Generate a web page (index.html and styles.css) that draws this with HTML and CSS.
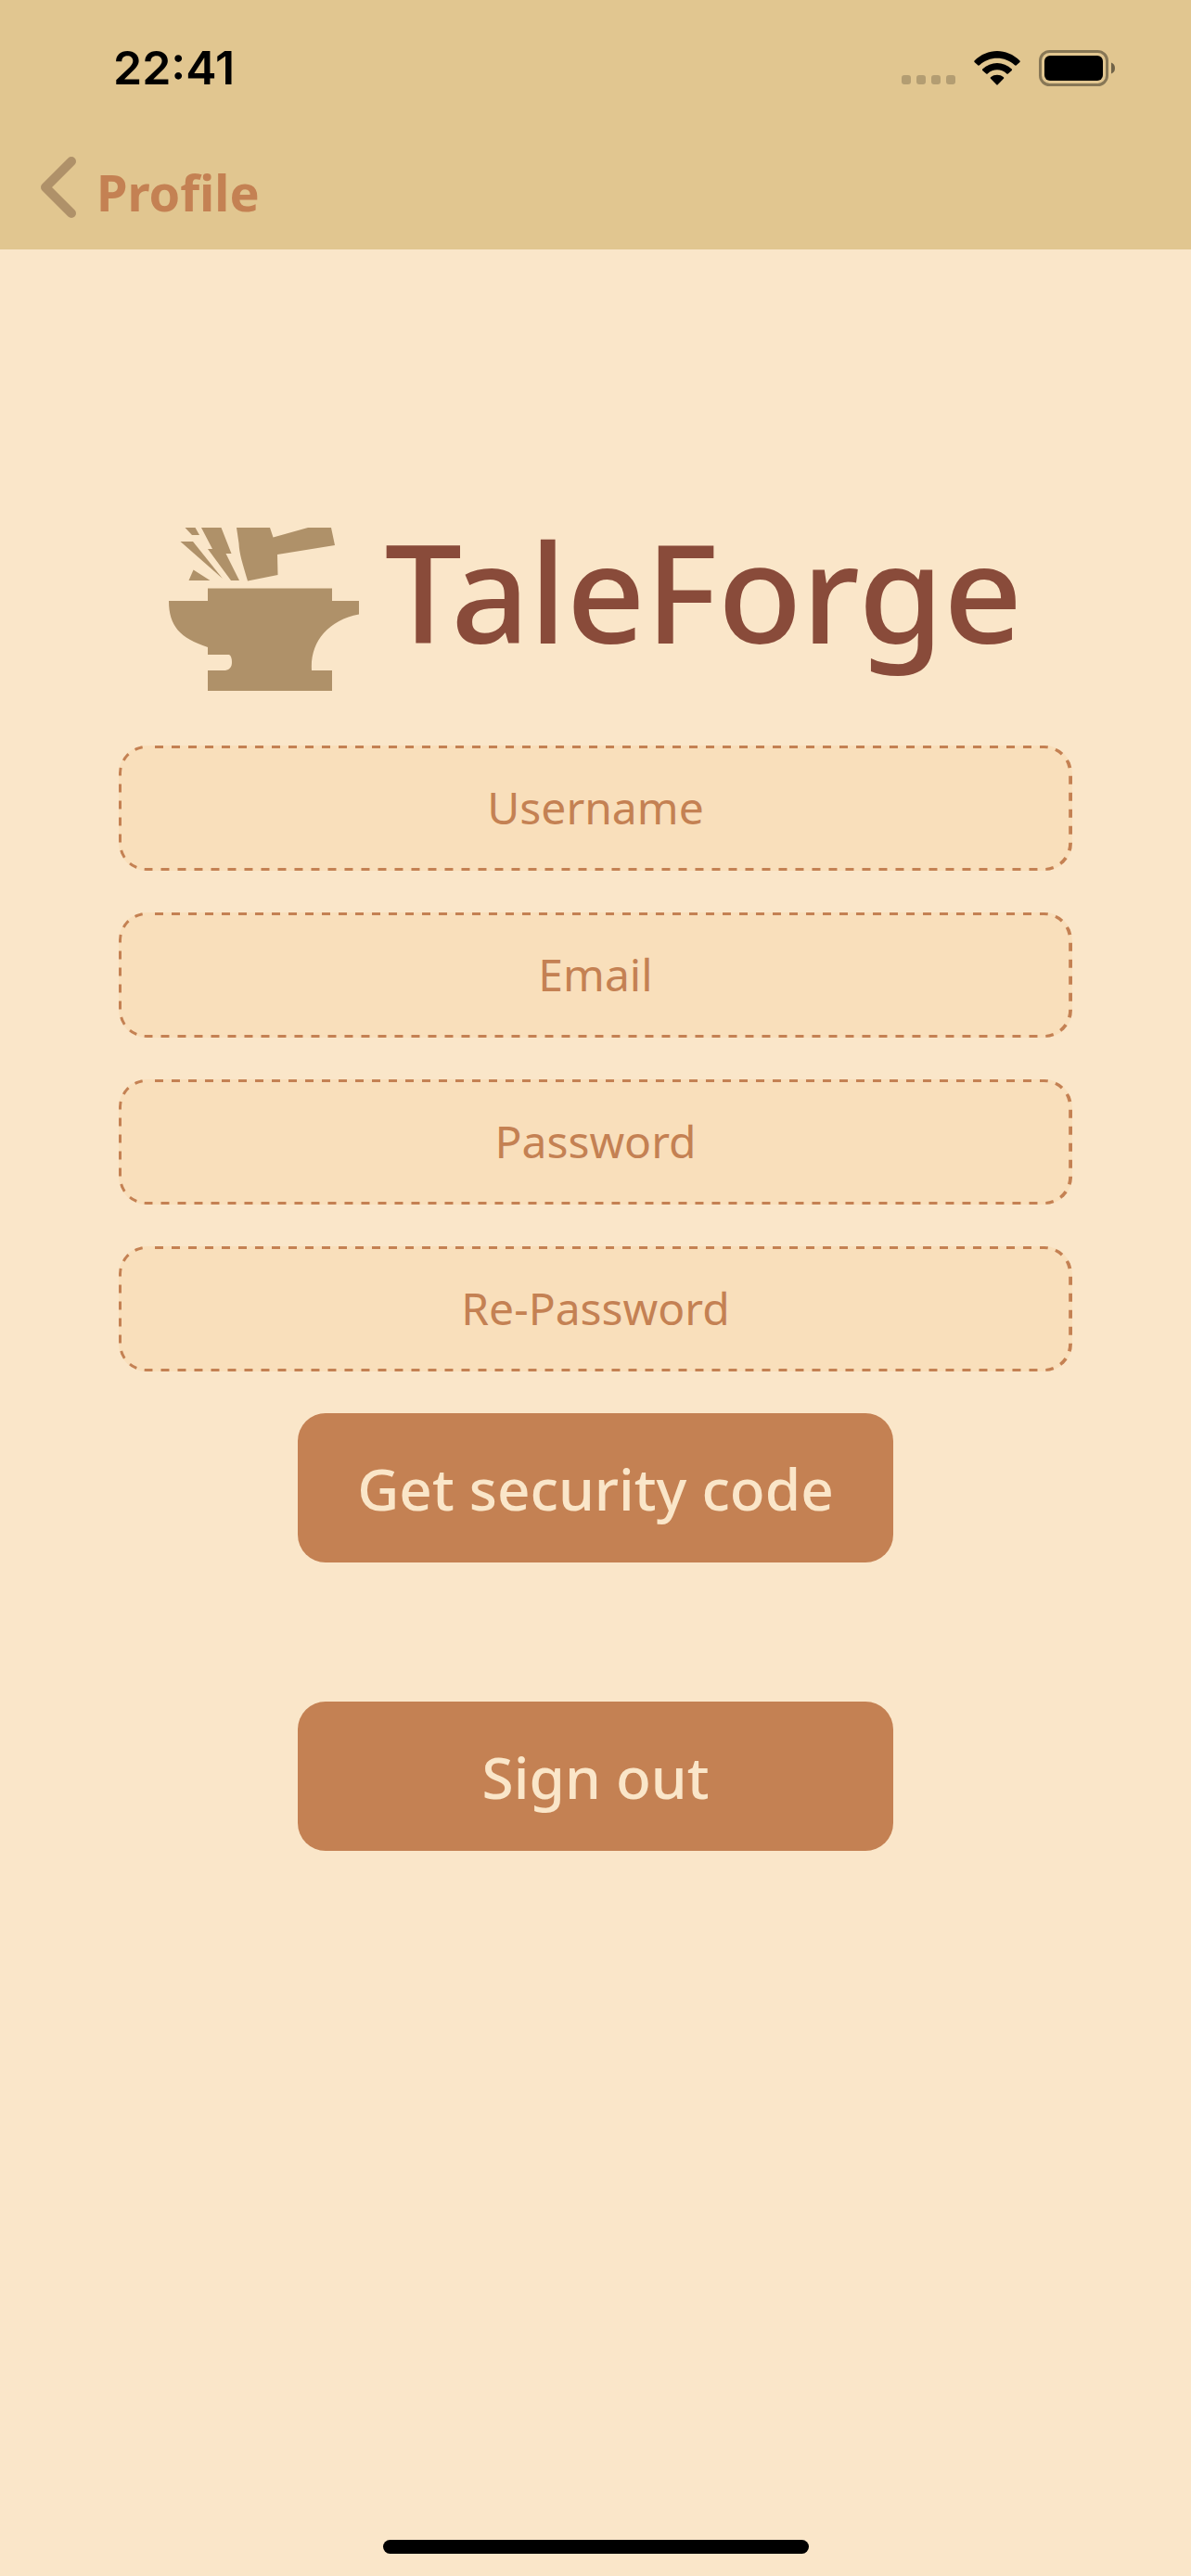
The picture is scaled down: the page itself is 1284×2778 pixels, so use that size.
FILE: index.html
```html
<!DOCTYPE html>
<html lang="en">
<head>
<meta charset="utf-8">
<meta name="viewport" content="width=device-width, initial-scale=1">
<title>TaleForge – Profile</title>
<link rel="stylesheet" href="styles.css">
</head>
<body>
<div class="screen">
  <header class="top">
    <div class="status">
      <time class="clock">22:41</time>
      <div class="indicators">
        <svg class="dots" viewBox="0 0 58 10" aria-hidden="true"><rect width="10" height="10" rx="3"/><rect x="16" width="10" height="10" rx="3"/><rect x="32" width="10" height="10" rx="3"/><rect x="48" width="10" height="10" rx="3"/></svg>
        <svg class="wifi" viewBox="0 0 50 37" aria-hidden="true"><path d="M0.5 10.5C14.5-3.500 35.500-3.500 49.500 10.500Q50 11.300 49.500 12L45.500 15.500Q44.800 16 44 15.300C33.500 5.200 16.500 5.200 6 15.300Q5.200 16 4.500 15.500L.5 12Q0 11.300.5 10.500Z"/><path d="M9.200 19.500C18 10.700 32 10.700 40.800 19.500Q41.400 20.200 40.800 20.900L36.800 24.500Q36 25 35.300 24.400C29.500 19 20.500 19 14.700 24.400Q14 25 13.200 24.500L9.200 20.900Q8.600 20.200 9.200 19.500Z"/><path d="M18 28.300C22 25 28 25 32 28.300Q32.700 29 32 29.800L25.700 36.300Q25 37 24.300 36.300L18 29.800Q17.300 29 18 28.300Z"/></svg>
        <svg class="battery" viewBox="0 0 82 39" aria-hidden="true"><rect x="1.500" y="1.500" width="72" height="36" rx="10" fill="none" stroke="#000" stroke-opacity=".4" stroke-width="3"/><rect x="6" y="6" width="63" height="27" rx="6"/><path d="M78 13.500Q82 15 82 19.500T78 25.500Z" opacity=".5"/></svg>
      </div>
    </div>
    <nav class="nav">
      <a class="back" href="#profile">
        <svg class="chevron" viewBox="0 0 38 66" aria-hidden="true"><path d="M33 5 5 33 33 61"/></svg>
        <span>Profile</span>
      </a>
    </nav>
  </header>

  <main class="content">
    <h1 class="brand">
      <svg class="anvil" viewBox="0 0 205 176" aria-hidden="true"><path d="M42 65.500H176V79H205V93.500C171 100 152 124 154 154H176V176H42V154H61C66 153 68 150 68 145C68 141 67 138 65 137H42V129C12 119 0 106 0 79H42Z"/><path d="M73 0H109L112.500 10.500 150 0H175L179 19 117 29 117.500 51 85 57.500C79 37 76 28 75.500 17Z"/><path d="M35 0H56.500L67.500 28H61.500L76 57H67L42 23H47Z"/><path d="M17.500 0H28.500L33 8H25Z"/><path d="M12.500 15H26L58 55Z"/><path d="M26.500 45.500 44.500 57H21.500Z"/></svg>
      <span>TaleForge</span>
    </h1>
    <form class="form" action="#" method="post">
      <div class="field"><svg class="outline" aria-hidden="true"><rect/></svg><input type="text" name="username" aria-label="Username" placeholder="Username"></div>
      <div class="field"><svg class="outline" aria-hidden="true"><rect/></svg><input type="email" name="email" aria-label="Email" placeholder="Email"></div>
      <div class="field"><svg class="outline" aria-hidden="true"><rect/></svg><input type="password" name="password" aria-label="Password" placeholder="Password"></div>
      <div class="field"><svg class="outline" aria-hidden="true"><rect/></svg><input type="password" name="repassword" aria-label="Re-Password" placeholder="Re-Password"></div>
      <button class="button" type="submit">Get security code</button>
    </form>
    <button class="button" type="button">Sign out</button>
  </main>
  <div class="home-bar"></div>
</div>
</body>
</html>
```
FILE: styles.css
```css
:root {
  --sand: #e1c690;
  --cream: #fae6c9;
  --peach: #f9dfbb;
  --clay: #c48153;
  --rust: #894b3a;
  --bronze: #af9169;
}

* { box-sizing: border-box; }

body {
  margin: 0;
  background: var(--cream);
  font-family: "Noto Sans", "Open Sans", sans-serif;
}

.screen {
  display: flex;
  flex-direction: column;
  min-height: 100vh;
}

.top { background: var(--sand); }

.status {
  display: flex;
  justify-content: space-between;
  align-items: center;
  height: 146px;
  padding: 0 82px 0 122px;
}

.clock {
  font: 600 50px/60px Inter, sans-serif;
  color: #000;
}

.indicators {
  display: flex;
  align-items: center;
  gap: 20px;
}

.dots { width: 58px; height: 10px; margin-top: 26px; opacity: .2; }
.wifi { width: 50px; height: 37px; }
.battery { width: 82px; height: 39px; }

.nav {
  display: flex;
  padding: 23px 44px 24px;
}

.back {
  display: flex;
  align-items: flex-start;
  gap: 22px;
  color: var(--clay);
  font-size: 54px;
  font-weight: 700;
  line-height: 76px;
  text-decoration: none;
}

.chevron {
  width: 38px;
  height: 66px;
  fill: none;
  stroke: var(--bronze);
  stroke-width: 10;
  stroke-linecap: round;
  stroke-linejoin: round;
}

.content {
  flex: 1;
  display: flex;
  flex-direction: column;
  align-items: center;
  gap: 150px;
  padding-top: 300px;
}

.brand {
  display: flex;
  justify-content: center;
  gap: 28px;
  margin: 0 0 -91px;
  color: var(--rust);
  font-size: 148px;
  font-weight: 500;
  line-height: 136px;
}

.anvil { width: 205px; height: 176px; fill: var(--bronze); }

.form {
  display: flex;
  flex-direction: column;
  align-items: center;
  gap: 45px;
  width: 100%;
}

.field {
  position: relative;
  width: 80%;
  height: 135px;
  border-radius: 30px;
  background: var(--peach);
}

/* Half of the 6px stroke is clipped away, which leaves a 3px dashed edge. */
.outline {
  position: absolute;
  inset: 0;
  width: 100%;
  height: 100%;
  border-radius: 30px;
  overflow: hidden;
  pointer-events: none;
}

.outline rect {
  width: 100%;
  height: 100%;
  rx: 30px;
  fill: none;
  stroke: var(--clay);
  stroke-width: 6;
  stroke-dasharray: 9;
  stroke-dashoffset: 9;
}

.field input {
  width: 100%;
  height: 100%;
  padding: 0 30px 2px;
  border: 0;
  border-radius: 30px;
  background: none;
  color: var(--clay);
  font: 400 48px/60px "Noto Sans", "Open Sans", sans-serif;
  text-align: center;
}

.field input::placeholder { color: var(--clay); opacity: 1; }

.button {
  width: 50%;
  height: 161px;
  padding: 0;
  border: 0;
  border-radius: 30px;
  background: var(--clay);
  color: var(--cream);
  font: 500 62px/76px "Noto Sans", "Open Sans", sans-serif;
}

.home-bar {
  align-self: center;
  width: 36%;
  max-width: 459px;
  height: 15px;
  margin-bottom: 24px;
  border-radius: 8px;
  background: #000;
}
```
